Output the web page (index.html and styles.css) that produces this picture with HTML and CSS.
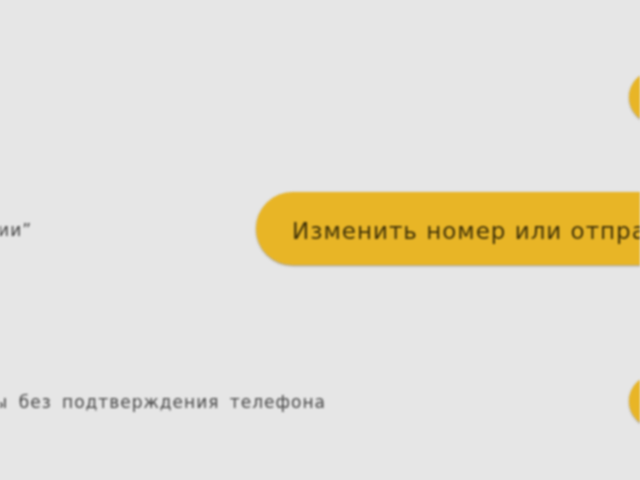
FILE: index.html
```html
<!DOCTYPE html>
<html lang="ru">
<head>
    <meta charset="utf-8">
    <title>Подтверждение телефона</title>
    <link rel="stylesheet" href="styles.css">
</head>
<body>
    <div class="page">
        <div class="row row-top">
            <div class="label label-none"></div>
            <button class="btn btn-small">Отправить код</button>
        </div>
        <div class="row row-main">
            <div class="label label-short">Подтверждение по почте или смс-сообщении”</div>
            <button class="btn btn-large">Изменить номер или отправить код ещё раз</button>
        </div>
        <div class="row row-bottom">
            <div class="label label-wide">Продолжить работы без подтверждения телефона</div>
            <button class="btn btn-small">Продолжить</button>
        </div>
    </div>
</body>
</html>
```

FILE: styles.css
```css
html, body {
    margin: 0;
    height: 100%;
    overflow: hidden;
    background-color: #e6e6e6;
}
.page {
    width: 640px;
    height: 480px;
    padding-top: 71px;
    box-sizing: border-box;
    overflow: hidden;
    font-family: "DejaVu Sans", sans-serif;
    filter: blur(1.2px);
}
.row {
    display: flex;
    align-items: center;
}
.row-main {
    margin-top: 69px;
}
.row-bottom {
    margin-top: 110px;
}
.label {
    flex-shrink: 0;
    display: flex;
    justify-content: flex-end;
    white-space: nowrap;
    padding-top: 2px;
    font-size: 17px;
    letter-spacing: 1px;
    word-spacing: 4px;
    color: #444;
}
.label-none {
    width: 629px;
}
.label-short {
    width: 32px;
    margin-right: 224px;
}
.label-wide {
    width: 326px;
    margin-right: 303px;
}
.btn {
    flex-shrink: 0;
    border: none;
    font-family: inherit;
    white-space: nowrap;
    background-color: #e8b526;
    color: #3d3008;
    box-shadow: 0 1px 2px rgba(90, 70, 20, 0.5);
}
.btn-small {
    height: 52px;
    padding: 0 36px;
    border-radius: 26px;
    font-size: 23px;
}
.btn-large {
    height: 73px;
    padding: 4px 36px 0;
    border-radius: 37px;
    font-size: 23px;
    letter-spacing: 1px;
}
```
